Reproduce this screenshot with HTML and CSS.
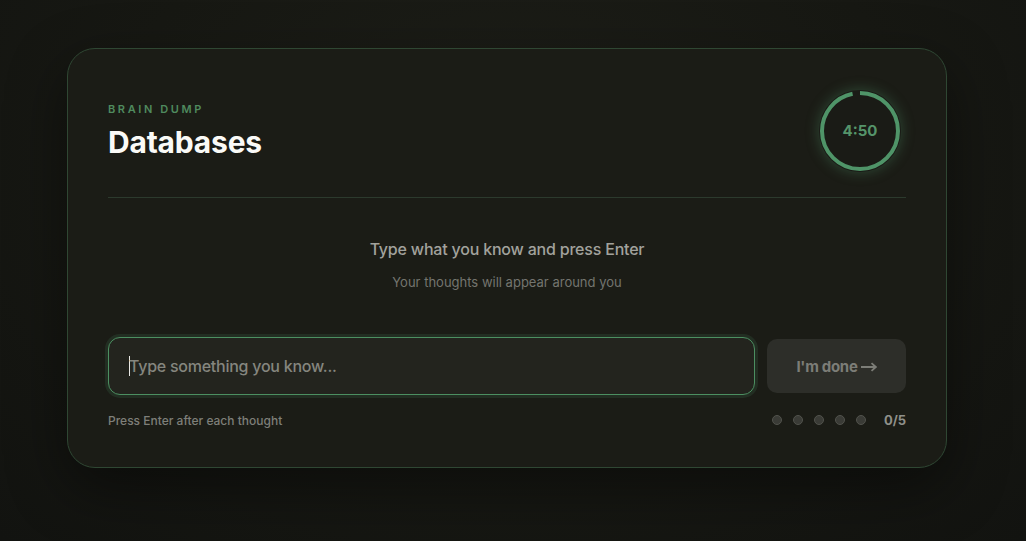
FILE: index.html
```html
<!DOCTYPE html>
<html>
  <head>
    <link rel="stylesheet" href="styles.css">
  </head>
  <body>
    <div class="card">
      <div class="header">
        <div class="titles">
          <div class="eyebrow">BRAIN DUMP</div>
          <h1>Databases</h1>
        </div>
        <div class="timer">
          <svg width="82" height="82" viewBox="0 0 82 82">
            <circle cx="41" cy="41" r="38" fill="none" stroke="#4f9468" stroke-width="4"
              stroke-dasharray="230.9 7.9" transform="rotate(-90 41 41)"/>
          </svg>
          <span class="time">4:50</span>
        </div>
      </div>
      <div class="prompt">
        <p class="lead">Type what you know and press Enter</p>
        <p class="sub">Your thoughts will appear around you</p>
      </div>
      <div class="entry">
        <div class="field">
          <span class="caret"></span>
          <span class="placeholder">Type something you know...</span>
        </div>
        <button class="done-btn">I'm done
          <svg class="arrow" width="16" height="10" viewBox="0 0 16 10">
            <path d="M0 5H14.5M10.5 1.2L14.8 5L10.5 8.8" fill="none" stroke="#7c7d77" stroke-width="1.8"/>
          </svg>
        </button>
      </div>
      <div class="footer">
        <span class="hint">Press Enter after each thought</span>
        <div class="progress">
          <span class="dot"></span>
          <span class="dot"></span>
          <span class="dot"></span>
          <span class="dot"></span>
          <span class="dot"></span>
          <span class="count">0/5</span>
        </div>
      </div>
    </div>
  </body>
</html>
```

FILE: styles.css
```css
/* dark brain dump card */
html, body {
  height: 100%;
}
body {
  margin: 0;
  font-family: Inter, "Noto Sans", sans-serif;
  background-color: #151611;
  background-image: radial-gradient(ellipse at 50% 30%, #1d1e18 0, #171813 55%, #121310 100%);
  overflow: hidden;
}
.card {
  width: 798px;
  margin: 48px 0 0 67px;
  padding: 41px 40px 39px;
  background-color: #1b1c16;
  border: 1px solid #2f4733;
  border-radius: 28px;
  box-shadow: 0 20px 60px rgba(0, 0, 0, 0.45);
}
.header {
  display: flex;
  justify-content: space-between;
  align-items: center;
  padding-bottom: 25px;
  border-bottom: 1px solid #2c3a2d;
}
.eyebrow {
  font-size: 11px;
  font-weight: 600;
  letter-spacing: 2.6px;
  color: #4f8a5e;
  margin-bottom: 8px;
}
.titles h1 {
  margin: 0;
  font-size: 30px;
  font-weight: 700;
  letter-spacing: -0.2px;
  color: #fafaf7;
}
.timer {
  position: relative;
  width: 82px;
  height: 82px;
  margin-right: 5px;
  border-radius: 50%;
  background-color: #1a1b16;
  box-shadow: 0 0 14px rgba(79, 148, 104, 0.4);
}
.timer svg {
  display: block;
}
.time {
  position: absolute;
  top: 0;
  left: 0;
  width: 100%;
  line-height: 82px;
  text-align: center;
  font-size: 15px;
  font-weight: 700;
  color: #55946a;
}
.prompt {
  text-align: center;
  padding: 41px 0 0;
}
.prompt p {
  margin: 0;
}
.lead {
  font-size: 16px;
  font-weight: 500;
  letter-spacing: -0.2px;
  color: #a2a29d;
}
.sub {
  margin-top: 15px !important;
  font-size: 13px;
  color: #74756f;
}
.entry {
  display: flex;
  align-items: center;
  gap: 12px;
  margin-top: 47px;
}
.field {
  flex: 1;
  height: 56px;
  display: flex;
  align-items: center;
  padding-left: 20px;
  background-color: #23241e;
  border: 1px solid #4c8f61;
  border-radius: 12px;
  box-shadow: 0 0 0 3px rgba(76, 143, 97, 0.16);
}
.caret {
  width: 1px;
  height: 20px;
  margin-right: -1px;
  background-color: #e8e8e4;
}
.placeholder {
  font-size: 16px;
  font-weight: 500;
  letter-spacing: -0.25px;
  color: #85867f;
}
.done-btn {
  display: flex;
  align-items: center;
  justify-content: center;
  gap: 3px;
  width: 139px;
  height: 54px;
  border: none;
  border-radius: 10px;
  background-color: #2d2e29;
  font-family: inherit;
  font-size: 15px;
  font-weight: 700;
  letter-spacing: -0.3px;
  color: #7c7d77;
}
.arrow {
  margin-top: 1px;
}
.footer {
  display: flex;
  justify-content: space-between;
  align-items: center;
  margin-top: 17px;
}
.hint {
  font-size: 12px;
  font-weight: 500;
  color: #7e7f79;
}
.progress {
  display: flex;
  align-items: center;
  gap: 11px;
}
.dot {
  width: 8px;
  height: 8px;
  border-radius: 50%;
  background-color: #3a3b36;
  border: 1px solid #51524c;
}
.count {
  margin-left: 7px;
  font-size: 13px;
  font-weight: 700;
  color: #8f908a;
}
```
